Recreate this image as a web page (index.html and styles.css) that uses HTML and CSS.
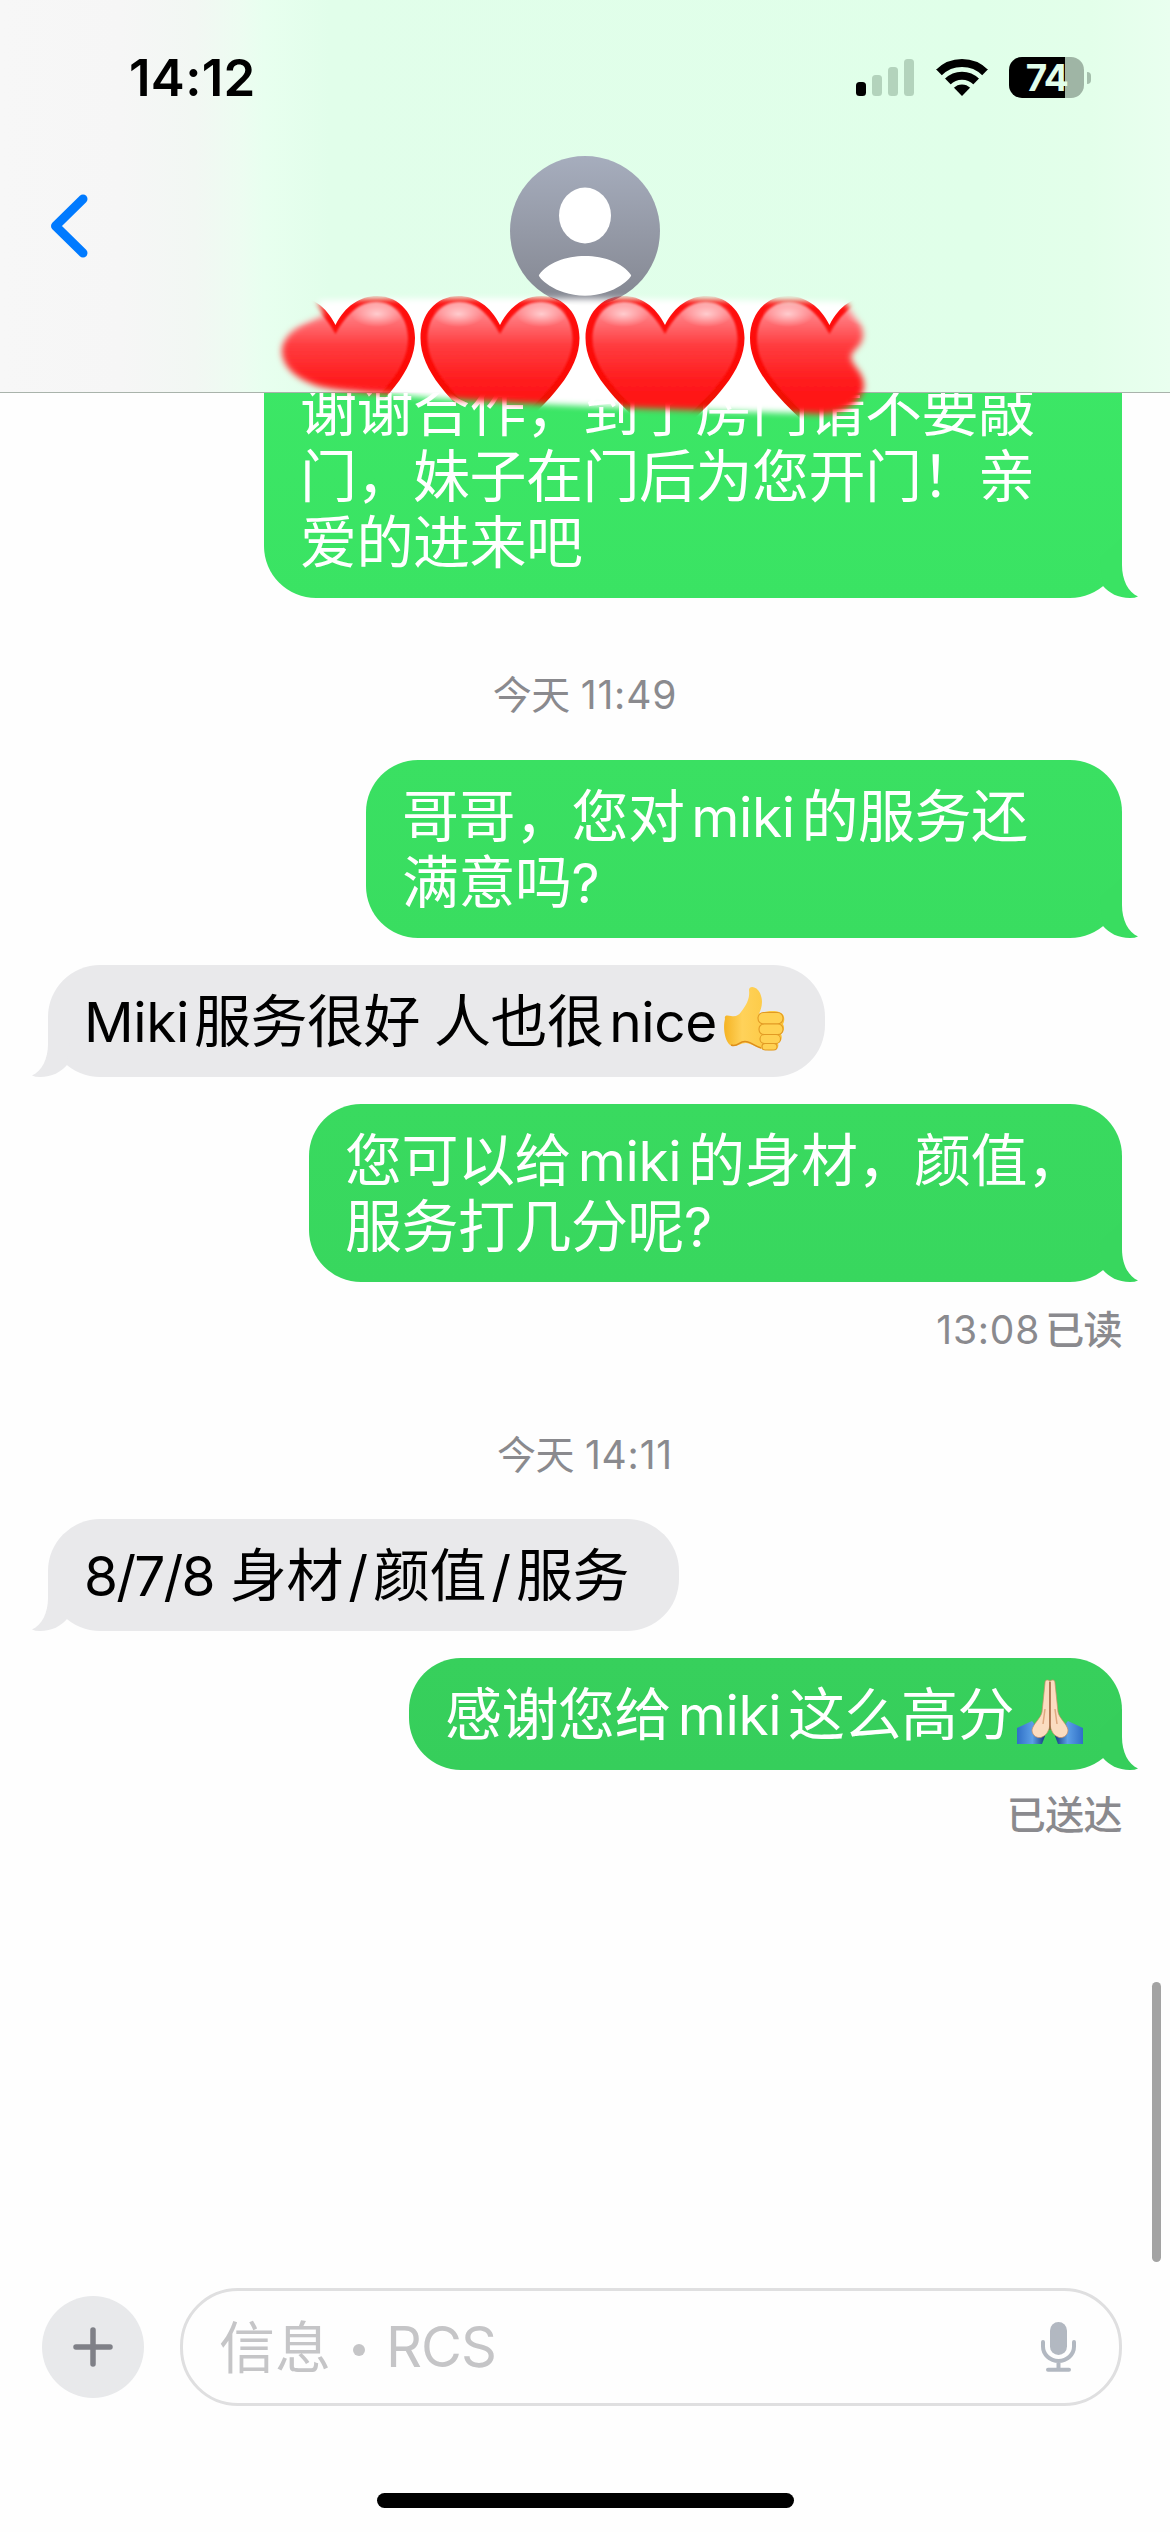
FILE: index.html
```html
<!DOCTYPE html>
<html lang="zh-CN">
<head>
<meta charset="utf-8">
<title>信息</title>
<link rel="stylesheet" href="styles.css">
</head>
<body>
<svg class="defs" width="0" height="0" aria-hidden="true">
  <defs>
    <symbol id="tail" viewBox="0 0 38 60"><path d="M22 0V27C22 42 28 54 38 58.5Q35 60 30 60C18 60 9 55 3 48L0 20Z"/></symbol>
  </defs>
</svg>
<div class="phone">
  <header class="header">
    <div class="status">
      <span class="clock">14:12</span>
      <div class="indicators">
        <svg class="signal" viewBox="0 0 58 37">
          <rect x="0" y="23" width="10" height="14" rx="3.5"/>
          <g fill="#b3d3bc"><rect x="16" y="16" width="10" height="21" rx="3.5"/><rect x="32" y="8" width="10" height="29" rx="3.5"/><rect x="48" y="0" width="10" height="37" rx="3.5"/></g>
        </svg>
        <svg class="wifi" viewBox="0 0 52 37">
          <clipPath id="wedge"><path d="M26 37L-14 -4H66Z"/></clipPath>
          <g clip-path="url(#wedge)" fill="none" stroke="#000">
            <circle cx="26" cy="37" r="33" stroke-width="8"/>
            <circle cx="26" cy="37" r="20.3" stroke-width="8"/>
            <circle cx="26" cy="37" r="11.5" fill="#000" stroke="none"/>
          </g>
        </svg>
        <div class="battery"><span class="level">74</span></div>
        <i class="nub"></i>
      </div>
    </div>
    <div class="nav">
      <svg class="back" viewBox="0 0 38 64"><path d="M33 5L5.500 32L33 59" fill="none" stroke="#007aff" stroke-width="9" stroke-linecap="round" stroke-linejoin="round"/></svg>
      <svg class="avatar" viewBox="0 0 150 150">
        <defs><linearGradient id="av" x2="0" y2="1"><stop stop-color="#a6adbd"/><stop offset="1" stop-color="#838690"/></linearGradient></defs>
        <circle cx="75" cy="75" r="75" fill="url(#av)"/>
        <ellipse cx="75" cy="59.500" rx="26" ry="28" fill="#fff"/>
        <path d="M29 119C37 107 56 100 75 100S113 107 121 119C123 120 106 139.700 75 139.700S27 120 29 119Z" fill="#fff"/>
      </svg>
    </div>
    <svg class="hearts" viewBox="270 285 610 145">
      <defs>
        <linearGradient id="red" x2="0" y2="1"><stop stop-color="#ff9a9e"/><stop offset=".13" stop-color="#ff7479"/><stop offset=".32" stop-color="#ff3c3f"/><stop offset=".6" stop-color="#ff1a1b"/><stop offset="1" stop-color="#ff1410"/></linearGradient>
        <linearGradient id="rim" x2="0" y2="1"><stop stop-color="#ff1010"/><stop offset=".55" stop-color="#fb0a05"/><stop offset="1" stop-color="#d22400"/></linearGradient>
        <radialGradient id="shine"><stop stop-color="#fff" stop-opacity=".6"/><stop offset="1" stop-color="#fff" stop-opacity="0"/></radialGradient>
        <filter id="soft" x="-10%" y="-20%" width="120%" height="140%"><feGaussianBlur stdDeviation="3.200"/></filter>
        <filter id="inner" x="-10%" y="-10%" width="120%" height="120%"><feGaussianBlur stdDeviation="1.300"/></filter>
        <mask id="brush" maskUnits="userSpaceOnUse" x="260" y="280" width="630" height="160">
          <path filter="url(#soft)" fill="#fff" d="M318 301C420 296 740 300 846 302C850 314 862 320 863 333C864 346 851 350 851 357C852 366 864 372 864 386C863 400 846 414 822 414C760 412 570 407 430 398C390 393 340 392 318 386C296 379 281 366 282 349C285 330 306 322 324 316Z"/>
        </mask>
        <g id="heart">
          <path fill="url(#rim)" d="M79.500 29C70 10 55 0 38 0C15 0 0 19 0 42C0 82 44 116 79.500 150C115 116 159 82 159 42C159 19 144 0 121 0C104 0 89 10 79.500 29Z"/>
          <path filter="url(#inner)" fill="url(#red)" d="M79.500 38C68 17 55 6 39 6C20 6 7 22 7 43C7 80 49 111 79.500 142C110 111 152 80 152 43C152 22 139 6 120 6C104 6 91 17 79.500 38Z"/>
          <ellipse cx="38" cy="18" rx="26" ry="13" fill="url(#shine)"/>
          <ellipse cx="121" cy="18" rx="26" ry="13" fill="url(#shine)"/>
        </g>
      </defs>
      <g mask="url(#brush)">
        <rect x="314" y="285" width="566" height="145" fill="#fff"/>
        <use href="#heart" x="256" y="296"/><use href="#heart" x="420.500" y="296"/><use href="#heart" x="585.500" y="296"/><use href="#heart" x="750" y="296"/>
      </g>
    </svg>
  </header>

  <main class="thread">
    <div class="bubble sent first">
      <p>谢谢合作，到了房门请不要敲</p><p>门，妹子在门后为您开门！亲</p><p>爱的进来吧</p>
      <svg class="tail"><use href="#tail"/></svg>
    </div>
    <div class="stamp t1">今天 <span class="num">11:49</span></div>
    <div class="bubble sent second">
      <p>哥哥，您对<span class="word">miki</span>的服务还</p><p>满意吗<span class="q">?</span></p>
      <svg class="tail"><use href="#tail"/></svg>
    </div>
    <div class="bubble got g1">
      <p><span class="word name">Miki</span>服务很好<span class="gap"></span>人也很<span class="word nice">nice</span><svg class="emoji" viewBox="0 0 71 66">
        <defs><linearGradient id="skin" x2="1" y2="0"><stop stop-color="#f5b324"/><stop offset=".3" stop-color="#ffd25a"/><stop offset="1" stop-color="#fbc437"/></linearGradient></defs>
        <path fill="url(#skin)" d="M6 33C5 29 8 29 12 30C17 31 20 29 22 26C28 18 31 12 30 4C30 -1 38 0 41 7C45 16 42 23 40 28C46 24 64 23 65 31C66 35 64 38 64 38C66 42 65 45 62 48C64 52 62 56 59 57C61 63 55 65 48 64C40 63 34 58 27 57C21 57 17 62 11 59C5 54 4 40 6 33Z"/>
        <g fill="#ffd152" stroke="#e29a24" stroke-width="1.100"><rect x="39" y="26.500" width="25" height="11.500" rx="5.500"/><rect x="40" y="38" width="24" height="10.500" rx="5"/><rect x="41" y="48.500" width="20.500" height="9" rx="4.500"/><rect x="43" y="57.500" width="15" height="6.500" rx="3.200"/></g>
        <path d="M12 59C20 62 20 53 29 56C33 57 36 60 42 62" fill="none" stroke="#dd8d1b" stroke-width="1.500"/>
      </svg></p>
      <svg class="tail"><use href="#tail"/></svg>
    </div>
    <div class="bubble sent third">
      <p>您可以给<span class="word">miki</span>的身材，颜值，</p><p>服务打几分呢<span class="q">?</span></p>
      <svg class="tail"><use href="#tail"/></svg>
    </div>
    <div class="receipt r1"><span class="num">13:08</span><b>已读</b></div>
    <div class="stamp t2">今天 <span class="num">14:11</span></div>
    <div class="bubble got g2">
      <p><span class="word score">8/7/8</span>身材<span class="word slash">/</span>颜值<span class="word slash">/</span>服务</p>
      <svg class="tail"><use href="#tail"/></svg>
    </div>
    <div class="bubble sent fourth">
      <p>感谢您给<span class="word">miki</span>这么高分<svg class="emoji" viewBox="0 0 71 66">
        <defs><linearGradient id="sl" x2="1" y2="0"><stop stop-color="#2f6fc6"/><stop offset=".55" stop-color="#5c9fe6"/><stop offset="1" stop-color="#123b80"/></linearGradient><linearGradient id="sr" x1="1" x2="0" y2="0"><stop stop-color="#2f6fc6"/><stop offset=".55" stop-color="#5c9fe6"/><stop offset="1" stop-color="#123b80"/></linearGradient></defs>
        <path fill="url(#sl)" d="M3 49L18 42L31 57L28 65H3Z"/><path fill="url(#sr)" d="M69 49L54 42L41 57L44 65H69Z"/>
        <path fill="#fbdcc0" stroke="#c98c62" stroke-width=".7" d="M36 2C33 0 31 1 31 4L28 33C27 39 19 45 18 51C18 57 24 60 28 58C33 56 35 51 36 46Z"/>
        <path fill="#fbdcc0" stroke="#c98c62" stroke-width=".7" d="M36 2C39 0 41 1 41 4L44 33C45 39 53 45 54 51C54 57 48 60 44 58C39 56 37 51 36 46Z"/>
        <path d="M36 3V51" stroke="#9a5a37" stroke-width="1.300"/><path d="M31 30L29 45M41 30L43 45" stroke="#dfa981" stroke-width="1.500"/>
      </svg></p>
      <svg class="tail"><use href="#tail"/></svg>
    </div>
    <div class="receipt r2">已送达</div>
    <i class="scrollbar"></i>
  </main>

  <footer class="composer">
    <div class="plus"><svg viewBox="0 0 40 40"><path d="M20 3V37M3 20H37" stroke="#7f8087" stroke-width="5.500" stroke-linecap="round"/></svg></div>
    <div class="field">
      <div class="hint"><span class="label">信息</span><i class="dot"></i><span class="rcs">RCS</span></div>
      <svg class="mic" viewBox="0 0 35 50"><rect x="9" y="0" width="17" height="33" rx="8.500" fill="#b2b8c1"/><path d="M2 20V24.500A15.500 14.500 0 0 0 33 24.500V20M17.500 39V47M7 47.800H28" fill="none" stroke="#b2b8c1" stroke-width="4" stroke-linecap="round"/></svg>
    </div>
  </footer>
  <div class="home"></div>
</div>
</body>
</html>
```
FILE: styles.css
```css
* { box-sizing: border-box; }
body { margin: 0; background: #fff; font-family: Inter, "Noto Sans CJK SC", sans-serif; }
p { margin: 0; }
.defs { position: absolute; }
.phone { width: 1170px; height: 2532px; display: flex; flex-direction: column; overflow: hidden; background: #fefefe; }

/* header */
.header { position: relative; z-index: 2; height: 393px; flex: none; border-bottom: 1px solid #a9b3ab; padding-top: 57px;
  background: linear-gradient(90deg, #f7f7f7 0, #f6f6f6 120px, #f2f7f3 195px, #edfcf1 240px, #e8ffef 264px, #e1feea 330px, #e0ffe9 980px, #e3ffea 1090px, #e9ffef 1170px); }
.status { display: flex; justify-content: space-between; height: 41px; padding: 0 79px 0 129px; }
.clock { font-size: 51px; font-weight: 600; line-height: 42px; letter-spacing: 0.3px; }
.indicators { display: flex; align-items: center; }
.signal { width: 58px; height: 37px; margin-right: 22px; }
.wifi { width: 52px; height: 37px; margin-right: 21px; }
.battery { width: 75px; height: 41px; border-radius: 13px; background: linear-gradient(90deg, #000 56px, #9fb5a5 56px); text-align: center; }
.level { font-size: 37px; font-weight: 700; line-height: 42px; letter-spacing: -1.5px; color: #e1feea; }
.nub { width: 4px; height: 12px; margin-left: 3px; border-radius: 0 6px 6px 0; background: #a5bfac; }
.nav { display: grid; grid-template-columns: 1fr 150px 1fr; width: 1170px; padding: 58px 50px 0; }
.back { width: 38px; height: 64px; margin-top: 38px; }
.avatar { width: 150px; height: 150px; }
.hearts { position: absolute; left: 270px; top: 285px; width: 610px; height: 145px; }

/* thread */
.thread { position: relative; height: 1890px; flex: none; display: flex; flex-direction: column; align-items: flex-end; padding: 0 48px; }
.bubble { position: relative; flex: none; padding: 19px 0 27px 36px; border-radius: 52px; font-size: 57px; letter-spacing: -0.5px; }
.bubble p { height: 66px; line-height: 66px; white-space: nowrap; font-family: "Noto Sans CJK SC", sans-serif; }
.tail { position: absolute; right: -16px; bottom: 0; width: 38px; height: 60px; }
.sent { color: #fff; }
.got { align-self: flex-start; background: #e9e9eb; color: #000; }
.got .tail { right: auto; left: -16px; transform: scaleX(-1); fill: #e9e9eb; }
.first { width: 858px; margin-top: -39px; border-top-left-radius: 0; border-top-right-radius: 0; background: linear-gradient(#3ce766, #3ae363); }
.first .tail { fill: #3ae363; }
.second { width: 756px; margin-top: 31px; background: linear-gradient(#3ae062, #39dd60); }
.second .tail { fill: #39dd60; }
.g1 { width: 777px; margin-top: 27px; }
.third { width: 813px; margin-top: 27px; background: linear-gradient(#39da5f, #38d75e); }
.third .tail { fill: #38d75e; }
.g2 { width: 631px; margin-top: 30px; }
.fourth { width: 713px; margin-top: 27px; background: linear-gradient(#37d05c, #36ce5b); }
.fourth .tail { fill: #36ce5b; }
.word { display: inline-block; width: 117px; text-align: center; font-family: Inter, sans-serif; font-size: 55px; letter-spacing: -0.4px; }
.name { width: 110px; text-align: left; }
.nice { width: 115px; padding-left: 4px; }
.score { width: 146px; text-align: left; letter-spacing: -1.8px; }
.slash { width: 30px; }
.gap { display: inline-block; width: 14px; }
.q { font-family: Inter, sans-serif; font-size: 55px; }
.emoji { width: 71px; height: 66px; margin-top: 2px; vertical-align: top; }
.stamp, .receipt { flex: none; height: 60px; font-size: 39px; line-height: 60px; color: #8a8a8e; white-space: nowrap; font-family: "Noto Sans CJK SC", sans-serif; font-weight: 400; letter-spacing: -0.6px; }
.stamp { align-self: center; }
.num { font-family: Inter, sans-serif; font-size: 39px; font-weight: 400; letter-spacing: 0.8px; }
.stamp .num { margin-left: 3px; }
.t1 { margin-top: 64px; height: 67px; }
.r1 { margin-top: 15px; }
.r1 b { font-weight: 500; margin-left: 5px; }
.t2 { margin-top: 65px; height: 67px; }
.r2 { margin-top: 12px; font-weight: 500; }
.scrollbar { position: absolute; right: 9px; top: 1589px; width: 9px; height: 280px; border-radius: 5px; background: #a3a3a3; }

/* composer */
.composer { display: flex; align-items: center; gap: 36px; flex: none; height: 118px; margin-top: 5px; padding: 0 48px 0 42px; }
.plus { display: grid; place-items: center; width: 102px; height: 102px; border-radius: 50%; background: #e8e9eb; }
.plus svg { width: 40px; height: 40px; }
.field { flex: 1; display: flex; align-items: center; justify-content: space-between; height: 118px; padding: 0 43px 0 36px; border: 3px solid #dfdfe0; border-radius: 58px; }
.hint { display: flex; align-items: center; height: 66px; color: #c5c5c7; }
.label { font: 56px/60px "Noto Sans CJK SC", sans-serif; padding-bottom: 6px; }
.dot { width: 12px; height: 12px; margin: 6px 21px 0 22px; border-radius: 50%; background: #c5c5c7; }
.rcs { font: 56px/66px Inter, sans-serif; letter-spacing: -1px; }
.mic { width: 35px; height: 50px; }
.home { flex: none; align-self: center; width: 417px; height: 15px; margin-top: 87px; border-radius: 8px; background: #000; }
```
